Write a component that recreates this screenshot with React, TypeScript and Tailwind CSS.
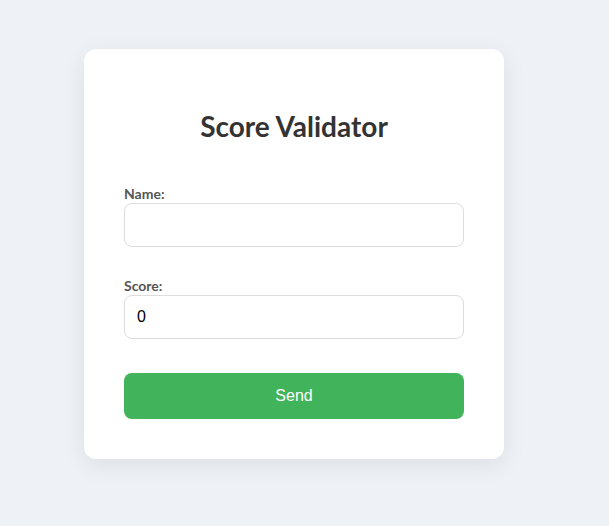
import { useState } from "react";

export default function App() {
  const [name, setName] = useState("");
  const [score, setScore] = useState("0");

  return (
    <div className="min-h-[526px] w-full bg-[#eef1f6] pl-[84px] pt-[49px] font-['Lato',sans-serif]">
      <div className="flex w-[420px] flex-col rounded-[12px] bg-white px-[40px] pb-[40px] pt-[40px] shadow-[0_6px_24px_rgba(0,0,0,0.08)]">
        {/* Title */}
        <h2 className="mt-[20px] mb-[41px] text-center text-[28px] font-bold leading-[34px] text-[#333]">
          Score Validator
        </h2>

        {/* Name */}
        <label className="block text-[14px] font-bold leading-[19px] text-[#555]">
          Name:
        </label>
        <input
          type="text"
          value={name}
          onChange={(e) => setName(e.target.value)}
          className="h-[44px] w-full rounded-[8px] border border-[#ddd] px-[12px] font-['Liberation_Sans',Arial,sans-serif] text-[16px] text-black outline-none"
        />

        {/* Score */}
        <label className="mt-[29px] block text-[14px] font-bold leading-[19px] text-[#555]">
          Score:
        </label>
        <input
          type="number"
          value={score}
          onChange={(e) => setScore(e.target.value)}
          className="h-[44px] w-full rounded-[8px] border border-[#ddd] px-[12px] font-['Liberation_Sans',Arial,sans-serif] text-[16px] text-black outline-none [appearance:textfield]"
        />

        <button className="mt-[34px] h-[46px] w-full rounded-[8px] bg-[#41b35b] font-['Liberation_Sans',Arial,sans-serif] text-[16px] text-white">
          Send
        </button>
      </div>
    </div>
  );
}
